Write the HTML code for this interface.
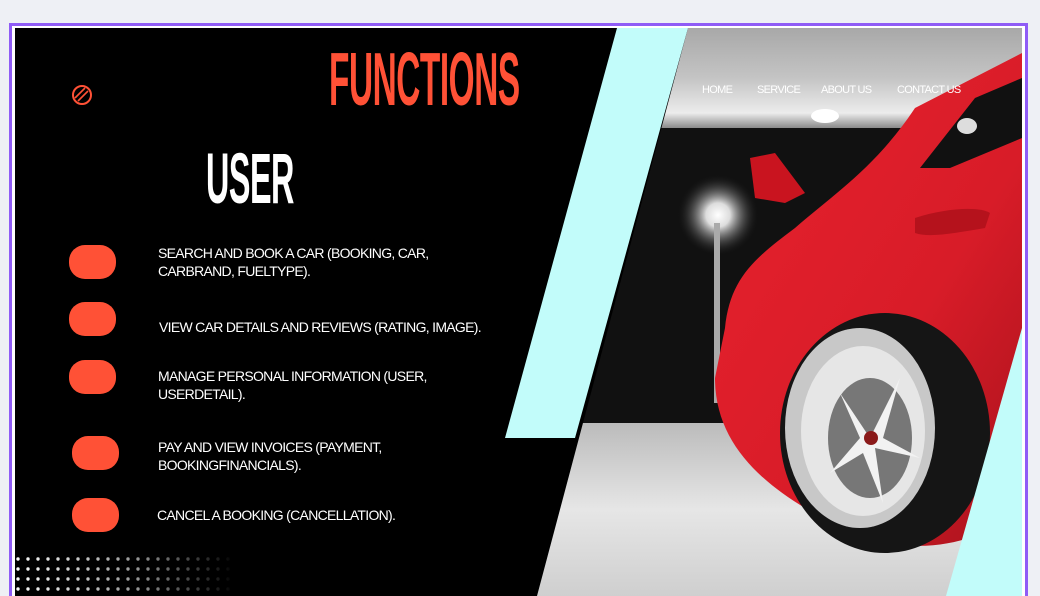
<!DOCTYPE html>
<html><head><meta charset="utf-8">
<style>
html,body{margin:0;padding:0;width:1040px;height:596px;overflow:hidden;}
body{background:#eef0f5;position:relative;font-family:"Liberation Sans",sans-serif;}
.frame{position:absolute;left:9px;top:23px;width:1013px;height:576px;border:3px solid #8f5cf6;border-bottom:none;background:#fff;}
.slide{position:absolute;left:15px;top:28px;width:1007px;height:568px;background:#000;overflow:hidden;}
.t{position:absolute;color:#fff;font-weight:bold;transform-origin:0 0;white-space:nowrap;}
.item{position:absolute;color:#fff;font-size:14px;line-height:18px;letter-spacing:-0.7px;}
.b{position:absolute;width:47px;height:34px;border-radius:16px;background:#ff5136;}
.nav{position:absolute;color:#fff;font-size:11px;letter-spacing:-0.7px;top:56px;}
</style></head><body>
<div class="frame"></div>
<div class="slide">
<svg width="1007" height="568" style="position:absolute;left:0;top:0">
<defs>
<clipPath id="ph"><polygon points="673,0 1007,0 1007,568 522,568"/></clipPath>
<radialGradient id="lamp" cx="0.5" cy="0.5" r="0.5"><stop offset="0" stop-color="#fff"/><stop offset="0.3" stop-color="#ddd"/><stop offset="1" stop-color="#222" stop-opacity="0"/></radialGradient>
<linearGradient id="ceil" x1="0" y1="0" x2="0" y2="1"><stop offset="0" stop-color="#a8a8a8"/><stop offset="0.5" stop-color="#c4c4c4"/><stop offset="0.85" stop-color="#ececec"/><stop offset="1" stop-color="#8a8a8a"/></linearGradient>
<linearGradient id="floor" x1="0" y1="0" x2="0" y2="1"><stop offset="0" stop-color="#bbb"/><stop offset="0.5" stop-color="#e6e6e6"/><stop offset="1" stop-color="#cfcfcf"/></linearGradient>
<linearGradient id="red" x1="0" y1="0" x2="1" y2="1"><stop offset="0" stop-color="#e8222e"/><stop offset="0.6" stop-color="#d81c28"/><stop offset="1" stop-color="#a8121c"/></linearGradient>
</defs>
<g clip-path="url(#ph)">
<rect x="500" y="0" width="507" height="568" fill="#111"/>
<rect x="500" y="0" width="507" height="100" fill="url(#ceil)"/>
<ellipse cx="810" cy="88" rx="14" ry="7" fill="#fff"/>
<rect x="500" y="395" width="507" height="173" fill="url(#floor)"/>
<circle cx="703" cy="187" r="40" fill="url(#lamp)"/>
<rect x="699" y="195" width="6" height="180" fill="#aaa"/>
<path d="M710 300 C715 250 740 230 780 200 C820 165 860 140 900 80 L1007 25 L1007 480 C960 520 880 540 790 480 C740 450 700 410 700 350 Z" fill="url(#red)"/>
<path d="M735 130 L760 125 L790 165 L770 175 L740 170 Z" fill="#c9141f"/>
<path d="M905 140 L960 70 L1007 50 L1007 110 L935 140 Z" fill="#111"/>
<ellipse cx="952" cy="98" rx="10" ry="8" fill="#ddd"/>
<path d="M900 190 C930 180 965 178 975 185 L970 200 C940 205 915 210 900 205 Z" fill="#b5121c"/>
<ellipse cx="870" cy="405" rx="105" ry="120" fill="#151515"/>
<ellipse cx="845" cy="400" rx="75" ry="100" fill="#c8c8c8"/>
<ellipse cx="848" cy="403" rx="62" ry="85" fill="#e6e6e6"/>
<ellipse cx="855" cy="410" rx="42" ry="60" fill="#777"/>
<path d="M855 410 L885 350 L868 410 L905 430 L860 420 L868 475 L848 425 L815 445 L845 410 L825 365 Z" fill="#f2f2f2"/>
<circle cx="856" cy="410" r="7" fill="#8a1a1a"/>
</g>
<polygon points="602,0 673,0 560,410 490,410" fill="#c2fcfa"/>
<polygon points="1007,300 1007,568 931,568" fill="#c2fcfa"/>
</svg>
<div class="t" style="left:314px;top:8px;font-size:75px;color:#ff5136;transform:scaleX(0.445);letter-spacing:-1px">FUNCTIONS</div>
<div class="t" style="left:191px;top:111px;font-size:71px;transform:scaleX(0.455);letter-spacing:-1px">USER</div>
<svg width="24" height="24" style="position:absolute;left:55px;top:55px" viewBox="0 0 24 24">
<circle cx="12" cy="12" r="9" fill="none" stroke="#ff5136" stroke-width="2"/>
<path d="M5 15 L15 5 M8 18 L18 8" stroke="#ff5136" stroke-width="1.6"/>
</svg>
<div class="nav" style="left:687px">HOME</div>
<div class="nav" style="left:742px">SERVICE</div>
<div class="nav" style="left:806px">ABOUT US</div>
<div class="nav" style="left:882px">CONTACT US</div>
<div class="b" style="left:54px;top:217px"></div>
<div class="b" style="left:54px;top:274px"></div>
<div class="b" style="left:54px;top:332px"></div>
<div class="b" style="left:57px;top:408px"></div>
<div class="b" style="left:57px;top:470px"></div>
<div class="item" style="left:143px;top:216px">SEARCH AND BOOK A CAR (BOOKING, CAR,<br>CARBRAND, FUELTYPE).</div>
<div class="item" style="left:144px;top:290px">VIEW CAR DETAILS AND REVIEWS (RATING, IMAGE).</div>
<div class="item" style="left:143px;top:339px">MANAGE PERSONAL INFORMATION (USER,<br>USERDETAIL).</div>
<div class="item" style="left:143px;top:410px">PAY AND VIEW INVOICES (PAYMENT,<br>BOOKINGFINANCIALS).</div>
<div class="item" style="left:142px;top:478px">CANCEL A BOOKING (CANCELLATION).</div>
<svg width="220" height="50" style="position:absolute;left:0;top:518px">
<defs>
<pattern id="d1" width="10" height="10" patternUnits="userSpaceOnUse"><circle cx="3" cy="3" r="1.7" fill="#fff"/></pattern>
<linearGradient id="fade" x1="0" x2="1"><stop offset="0" stop-color="#fff"/><stop offset="0.55" stop-color="#fff" stop-opacity="0.6"/><stop offset="1" stop-color="#fff" stop-opacity="0"/></linearGradient>
<mask id="m"><rect x="0" y="0" width="220" height="50" fill="url(#fade)"/></mask>
</defs>
<rect x="0" y="8" width="220" height="42" fill="url(#d1)" mask="url(#m)"/>
</svg>
</div>
</body></html>
